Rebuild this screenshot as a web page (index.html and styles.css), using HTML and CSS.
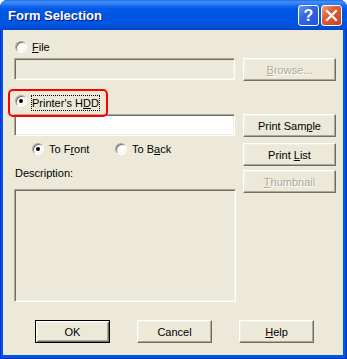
FILE: index.html
```html
<!DOCTYPE html>
<html>
	<head>
		<meta charset="utf-8">
		<title>Form Selection</title>
		<link rel="stylesheet" href="styles.css">
	</head>
	<body>
		<!-- 窗口 -->
		<div class="window">
			<div class="titlebar">
				<span class="title">Form Selection</span>
				<div class="caption-btns">
					<span class="cbtn help">?</span>
					<span class="cbtn close">
						<svg width="13" height="13" viewBox="0 0 13 13">
							<path d="M2 2 L11 11 M11 2 L2 11" stroke="#fff" stroke-width="2.2" stroke-linecap="square"/>
						</svg>
					</span>
				</div>
			</div>
			<div class="client">
				<div class="main">
					<div class="left">
						<div class="opt row-file"><span class="radio"></span><span class="lbl"><u>F</u>ile</span></div>
						<div class="field off"></div>
						<div class="opt row-hdd"><span class="radio on"></span><span class="lbl focus">Printer's H<u>D</u>D</span></div>
						<div class="field mt3"></div>
						<div class="opt row-side">
							<span class="item"><span class="radio on"></span><span class="lbl">To F<u>r</u>ont</span></span>
							<span class="item"><span class="radio"></span><span class="lbl">To B<u>a</u>ck</span></span>
						</div>
						<div class="desc-label">Description:</div>
						<div class="desc-box"></div>
					</div>
					<div class="right">
						<div class="btn off browse"><span><u>B</u>rowse...</span></div>
						<div class="btn sample"><span>Print Sam<u>p</u>le</span></div>
						<div class="btn list"><span>Print <u>L</u>ist</span></div>
						<div class="btn off thumb"><span><u>T</u>humbnail</span></div>
					</div>
				</div>
				<div class="actions">
					<div class="btn def">OK</div>
					<div class="btn">Cancel</div>
					<div class="btn"><span><u>H</u>elp</span></div>
				</div>
			</div>
		</div>
	</body>
</html>
```

FILE: styles.css
```css
*{
	margin: 0;
	padding: 0;
	box-sizing: border-box;
}
body{
	width: 347px;
	height: 359px;
	overflow: hidden;
	background-color: #fff;
	font-family: "Liberation Sans", Arial, sans-serif;
	font-size: 11px;
	color: #000;
}
u{
	text-decoration: underline;
	text-underline-offset: 1px;
}

/* 窗口外框 */
.window{
	width: 347px;
	height: 359px;
	background-color: #0055e5;
	border-radius: 8px 8px 0 0;
	display: flex;
	flex-direction: column;
	box-shadow: inset 1px 0 #0831d9, inset -1px 0 #0030b8, inset 0 -1px #0030b8;
}
.titlebar{
	height: 30px;
	flex: none;
	display: flex;
	align-items: center;
	padding: 0 5px 0 8px;
	border-radius: 7px 7px 0 0;
	background: linear-gradient(#0a5de6 0, #3f8cf3 1px, #3a86f5 3px, #1868ee 6px, #0058e6 9px, #0056e4 18px, #0055e0 24px, #0050d8 27px, #0047ca 30px);
}
.title{
	flex: 1;
	color: #fff;
	font-weight: bold;
	font-size: 13px;
	text-shadow: 1px 1px #0a1883;
	padding-top: 1px;
}
.caption-btns{
	display: flex;
	gap: 2px;
	align-self: flex-start;
	margin-top: 5px;
}
.cbtn{
	width: 21px;
	height: 21px;
	border: 1px solid #fff;
	border-radius: 3px;
	display: flex;
	align-items: center;
	justify-content: center;
	color: #fff;
}
.help{
	background: linear-gradient(135deg, #6b9af7 0, #3467e6 40%, #1f52d8 100%);
	font-weight: bold;
	font-size: 16px;
}
.close{
	background: linear-gradient(135deg, #f0a688 0, #e2603a 35%, #c8421c 100%);
}

/* 客户区 */
.client{
	flex: 1;
	margin: 0 4px 4px 3px;
	background-color: #ece9d8;
	padding: 10px 7px 12px 11px;
}
.main{
	display: flex;
	gap: 7px;
}
.left{
	width: 222px;
	display: flex;
	flex-direction: column;
}
.right{
	width: 93px;
	display: flex;
	flex-direction: column;
}

/* 单选 */
.opt{
	display: flex;
	align-items: center;
	height: 14px;
}
.row-file{
	padding-left: 1px;
}
.radio{
	flex: none;
	position: relative;
	width: 12px;
	height: 12px;
	border-radius: 50%;
	border: 1px solid;
	border-color: #aca899 #fff #fff #aca899;
	background-color: #fff;
	box-shadow: inset 1px 1px #716f64, inset -1px -1px #f1efe2;
}
.radio.on::after{
	content: "";
	position: absolute;
	left: 3px;
	top: 3px;
	width: 4px;
	height: 4px;
	border-radius: 50%;
	background-color: #000;
}
.lbl{
	margin-left: 5px;
	white-space: nowrap;
}
.row-hdd{
	margin-top: 15px;
	height: 16px;
	align-items: flex-start;
	padding-left: 1px;
	position: relative;
}
/* 红色标注框 */
.row-hdd::before{
	content: "";
	position: absolute;
	left: -6px;
	top: -6px;
	width: 96px;
	height: 24px;
	border: 2px solid #f00;
	border-radius: 5px;
}
.focus{
	margin-left: 4px;
	border: 1px dotted #000;
	line-height: 14px;
}
.row-side{
	margin-top: 6px;
	padding-left: 18px;
}
.item{
	display: flex;
	align-items: center;
	width: 83px;
}

/* 文本框 */
.field{
	width: 221px;
	height: 22px;
	margin-top: 4px;
	border: 1px solid;
	border-color: #aca899 #fff #fff #aca899;
	box-shadow: inset 1px 1px #716f64, inset -1px -1px #f1efe2;
	background-color: #fff;
}
.field.off{
	background-color: #ece9d8;
}
.field.mt3{
	margin-top: 3px;
}
.desc-label{
	margin-top: 11px;
	line-height: 13px;
	padding-left: 1px;
}
.desc-box{
	margin-top: 9px;
	width: 222px;
	height: 113px;
	border: 1px solid;
	border-color: #aca899 #fff #fff #aca899;
	box-shadow: inset 1px 1px #716f64, inset -1px -1px #f1efe2;
	background-color: #ece9d8;
}

/* 按钮 */
.btn{
	width: 93px;
	height: 23px;
	display: flex;
	align-items: center;
	justify-content: center;
	background-color: #ece9d8;
	border: 1px solid;
	border-color: #fff #716f64 #716f64 #fff;
	box-shadow: inset -1px -1px #aca899, inset 1px 1px #f1efe2;
	white-space: nowrap;
}
.btn.off{
	color: #aca899;
	text-shadow: 1px 1px #fff;
}
.btn.def{
	border-color: #000;
	box-shadow: inset 1px 1px #fff, inset -1px -1px #716f64, inset 2px 2px #f1efe2, inset -2px -2px #aca899;
}
.browse{
	margin-top: 18px;
}
.sample{
	margin-top: 33px;
}
.list{
	margin-top: 6px;
}
.thumb{
	margin-top: 4px;
}
.actions{
	display: flex;
	gap: 27px;
	margin-top: 18px;
	padding-left: 21px;
}
.actions .btn{
	width: 75px;
}
```
